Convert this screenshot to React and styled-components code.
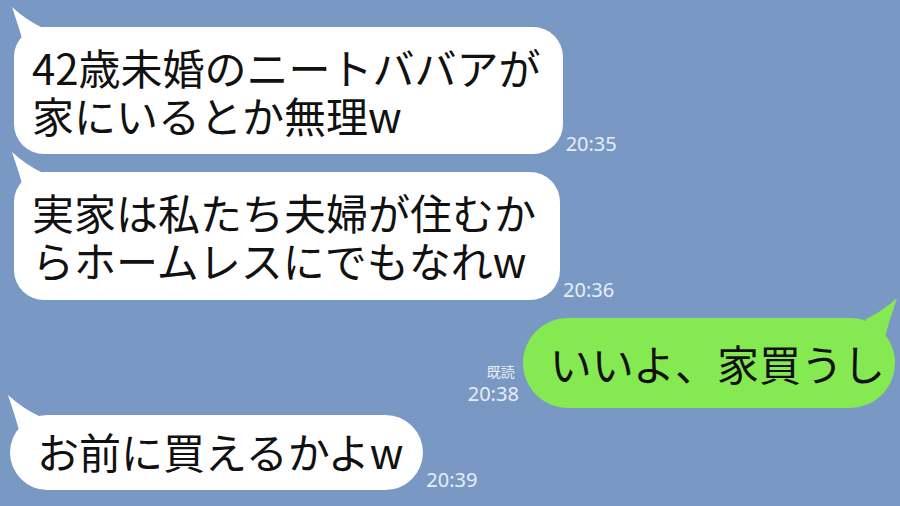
import styled, { createGlobalStyle } from 'styled-components';

const GlobalStyle = createGlobalStyle`
  html, body {
    margin: 0;
    padding: 0;
    background: #7998c4;
  }
`;

const Screen = styled.div`
  width: 900px;
  height: 506px;
  overflow: hidden;
  box-sizing: border-box;
  padding-top: 27px;
  background: #7998c4;
  display: flex;
  flex-direction: column;
  font-family: "Noto Sans CJK JP", "Noto Sans", sans-serif;
`;

const Row = styled.div`
  display: flex;
  align-items: flex-end;
  justify-content: ${(p) => (p.$mine ? 'flex-end' : 'flex-start')};
  margin-top: ${(p) => p.$top || 0}px;
  padding-left: ${(p) => p.$left || 0}px;
  padding-right: ${(p) => (p.$mine ? 5 : 0)}px;
`;

const Bubble = styled.div`
  position: relative;
  background: ${(p) => (p.$mine ? '#85e952' : '#ffffff')};
  color: #111;
  font-size: 42px;
  line-height: 48px;
  white-space: pre-line;
  border-radius: ${(p) => (p.$pill ? '999px' : '30px')};
  padding: ${(p) => p.$pad};

  &::before {
    content: '';
    position: absolute;
    top: -22px;
    width: 44px;
    height: 44px;
    background: inherit;
    border-radius: 0;
    ${(p) => (p.$mine ? 'right: -4px; transform: scaleX(-1);' : 'left: -4px;')}
    clip-path: path('M2 2 Q16 15 33 23 L33 44 L15 44 Q9 22 2 2 Z');
  }
`;

const Time = styled.span`
  font-family: "Noto Sans", "Noto Sans CJK JP", sans-serif;
  font-size: 20px;
  line-height: 1;
  color: #e8eef7;
  margin-left: 3px;
  white-space: nowrap;
`;

const Meta = styled.div`
  display: flex;
  flex-direction: column;
  align-items: flex-end;
  margin-right: 4px;
  padding-bottom: 4px;
  color: #e8eef7;
`;

const Read = styled.span`
  font-family: "Noto Sans CJK JP", sans-serif;
  font-size: 14px;
  line-height: 14px;
  margin-bottom: 6px;
  margin-right: 4px;
`;

const MetaTime = styled(Time)`
  margin-left: 0;
`;

const App = () => {
  return (
    <Screen>
      <GlobalStyle />
      <Row $left={14}>
        <Bubble $pad="16px 22px 15px 18px">{'42歳未婚のニートババアが\n家にいるとか無理w'}</Bubble>
        <Time>20:35</Time>
      </Row>
      <Row $left={14} $top={18}>
        <Bubble $pad="16px 24px 16px 18px">{'実家は私たち夫婦が住むか\nらホームレスにでもなれw'}</Bubble>
        <Time>20:36</Time>
      </Row>
      <Row $mine $top={18}>
        <Meta>
          <Read>既読</Read>
          <MetaTime>20:38</MetaTime>
        </Meta>
        <Bubble $mine $pill $pad="21px 10px 21px 27px">いいよ、家買うし</Bubble>
      </Row>
      <Row $left={10} $top={7}>
        <Bubble $pill $pad="12px 20px 15px 27px">お前に買えるかよw</Bubble>
        <Time>20:39</Time>
      </Row>
    </Screen>
  );
};

export default App;
